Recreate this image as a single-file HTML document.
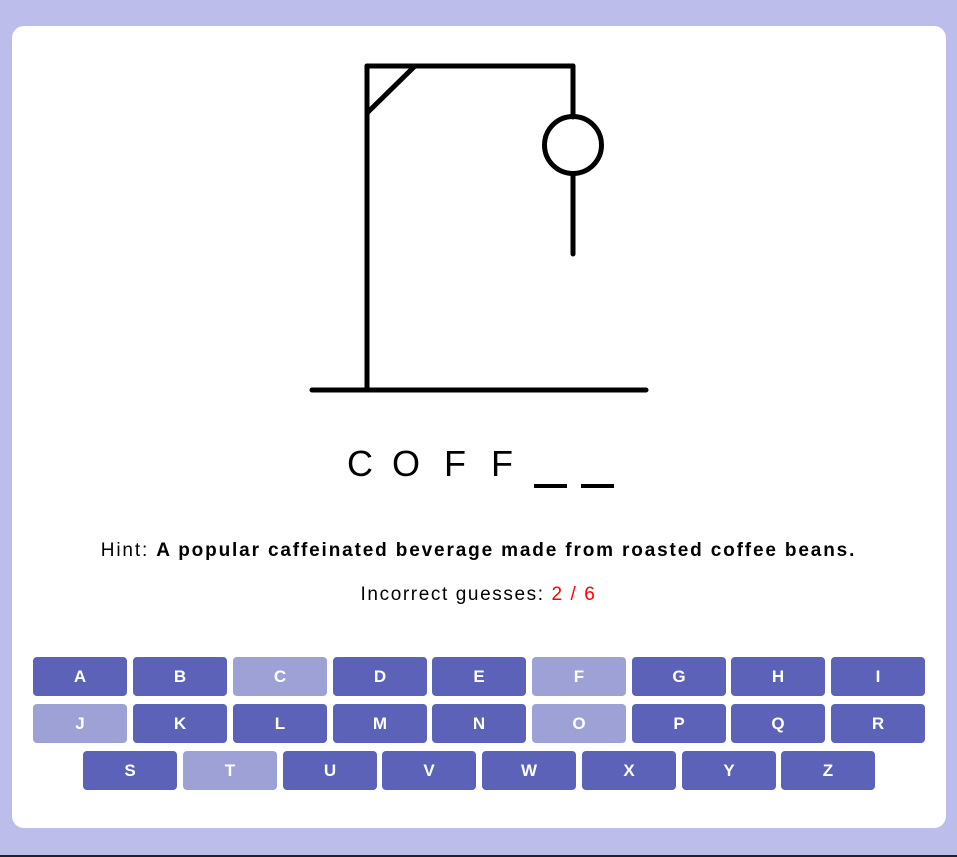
<!DOCTYPE html>
<html><head><style>
html,body{margin:0;padding:0}
body{width:957px;height:857px;background:#bdbdeb;position:relative;overflow:hidden;font-family:"Liberation Sans",sans-serif}
.card{position:absolute;left:12px;top:26px;width:934px;height:802px;background:#fff;border-radius:12px}
.line{position:absolute;left:0;top:855px;width:957px;height:2px;background:#222}
.l{position:absolute;font-size:36px;color:#000;top:443px}
.u{position:absolute;top:484px;width:33px;height:4px;background:#000}
.t{position:absolute;left:0;width:957px;text-align:center;font-size:19px;color:#000}
.b{position:absolute;width:94px;height:39px;border-radius:4px;background:#5c62b8;color:#fff;font-weight:bold;font-size:17px;text-align:center;line-height:40px}
.d{background:#9ea1d5}
</style></head><body>
<div class="card"></div>
<svg style="position:absolute;left:0;top:0" width="957" height="857">
<g stroke="#000" stroke-width="5" stroke-linecap="round" fill="none">
<line x1="312" y1="390" x2="646" y2="390"/>
<line x1="367" y1="390" x2="367" y2="66"/>
<line x1="367" y1="66" x2="573" y2="66"/>
<line x1="367" y1="113" x2="415" y2="66"/>
<line x1="573" y1="66" x2="573" y2="117"/>
<circle cx="573" cy="145" r="28.5"/>
<line x1="573" y1="175" x2="573" y2="254"/>
</g></svg>
<span class="l" style="left:347px">C</span>
<span class="l" style="left:392px">O</span>
<span class="l" style="left:444px">F</span>
<span class="l" style="left:491px">F</span>
<div class="u" style="left:534px"></div>
<div class="u" style="left:581px"></div>
<div class="t" style="top:540px;letter-spacing:1.85px">Hint: <b>A popular caffeinated beverage made from roasted coffee beans.</b></div>
<div class="t" style="top:584px;letter-spacing:1.6px">Incorrect guesses: <b style="color:#f00;font-weight:normal">2 / 6</b></div>
<div class="b" style="left:33px;top:657px">A</div>
<div class="b" style="left:133px;top:657px">B</div>
<div class="b d" style="left:233px;top:657px">C</div>
<div class="b" style="left:333px;top:657px">D</div>
<div class="b" style="left:432px;top:657px">E</div>
<div class="b d" style="left:532px;top:657px">F</div>
<div class="b" style="left:632px;top:657px">G</div>
<div class="b" style="left:731px;top:657px">H</div>
<div class="b" style="left:831px;top:657px">I</div>
<div class="b d" style="left:33px;top:704px">J</div>
<div class="b" style="left:133px;top:704px">K</div>
<div class="b" style="left:233px;top:704px">L</div>
<div class="b" style="left:333px;top:704px">M</div>
<div class="b" style="left:432px;top:704px">N</div>
<div class="b d" style="left:532px;top:704px">O</div>
<div class="b" style="left:632px;top:704px">P</div>
<div class="b" style="left:731px;top:704px">Q</div>
<div class="b" style="left:831px;top:704px">R</div>
<div class="b" style="left:83px;top:751px">S</div>
<div class="b d" style="left:183px;top:751px">T</div>
<div class="b" style="left:283px;top:751px">U</div>
<div class="b" style="left:382px;top:751px">V</div>
<div class="b" style="left:482px;top:751px">W</div>
<div class="b" style="left:582px;top:751px">X</div>
<div class="b" style="left:682px;top:751px">Y</div>
<div class="b" style="left:781px;top:751px">Z</div>
<div class="line"></div>
</body></html>
